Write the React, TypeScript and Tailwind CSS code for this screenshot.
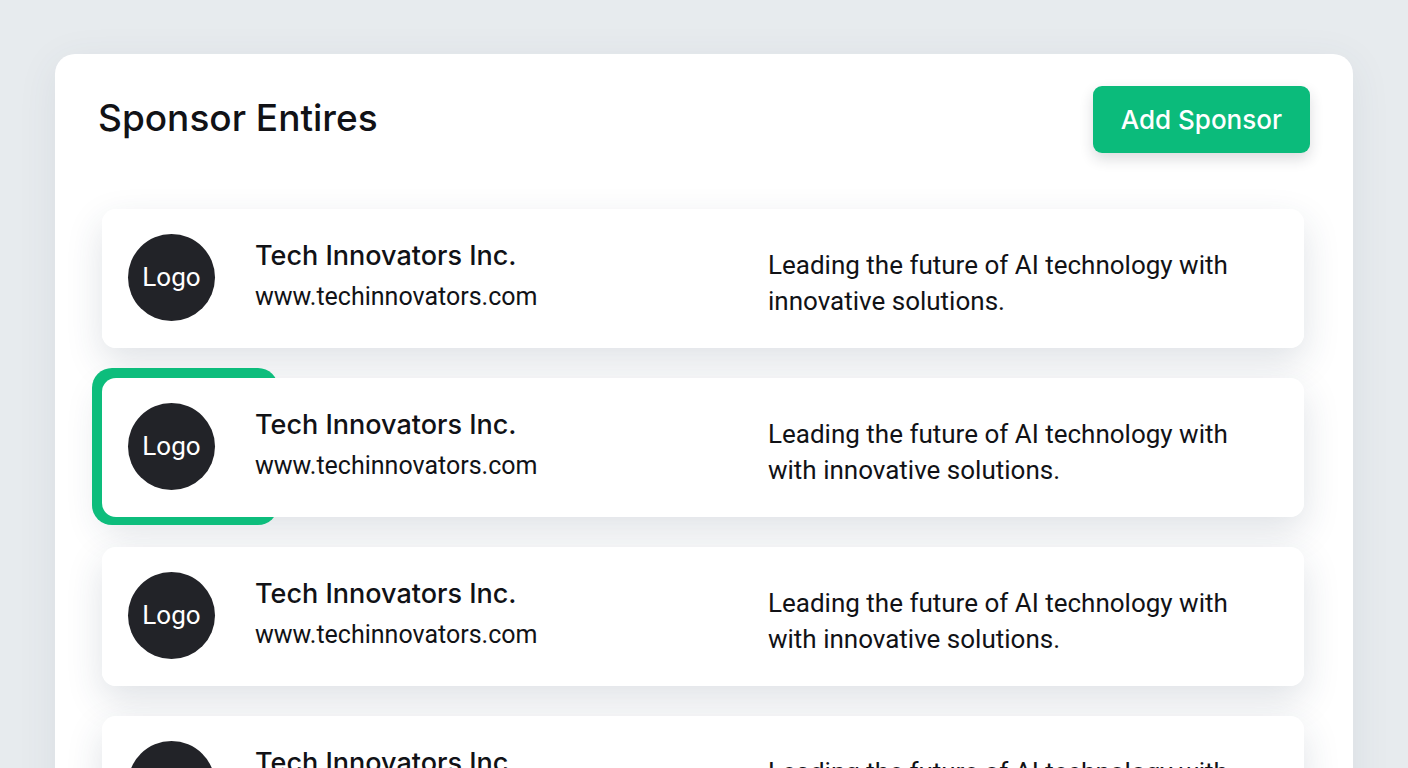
type Sponsor = {
  id: number;
  name: string;
  site: string;
  lines: [string, string];
  selected?: boolean;
};

const sponsors: Sponsor[] = [
  {
    id: 1,
    name: 'Tech Innovators Inc.',
    site: 'www.techinnovators.com',
    lines: ['Leading the future of AI technology with', 'innovative solutions.'],
  },
  {
    id: 2,
    name: 'Tech Innovators Inc.',
    site: 'www.techinnovators.com',
    lines: ['Leading the future of AI technology with', 'with innovative solutions.'],
    selected: true,
  },
  {
    id: 3,
    name: 'Tech Innovators Inc.',
    site: 'www.techinnovators.com',
    lines: ['Leading the future of AI technology with', 'with innovative solutions.'],
  },
  {
    id: 4,
    name: 'Tech Innovators Inc.',
    site: 'www.techinnovators.com',
    lines: ['Leading the future of AI technology with', 'with innovative solutions.'],
  },
];

function SponsorRow({ sponsor }: { sponsor: Sponsor }) {
  return (
    <li className="relative rounded-[14px] shadow-[0_14px_36px_rgba(40,60,85,0.15)]">
      {sponsor.selected && (
        <span
          aria-hidden="true"
          className="absolute -top-2.5 -bottom-2 -left-2.5 w-[186px] rounded-[20px] bg-[#0dbd7c]"
        />
      )}
      <article className="relative grid grid-cols-[640fr_512fr] items-center rounded-[14px] bg-white pt-[25px] pr-6 pb-[27px] pl-[26px]">
        <div className="flex items-center gap-10">
          <div className="flex size-[87px] shrink-0 items-center justify-center rounded-full bg-[#222328] font-['Roboto','Liberation_Sans',sans-serif] text-[26px] text-white">
            Logo
          </div>
          <div className="min-w-0">
            <h2 className="text-[27px] leading-[42px] font-medium text-[#111216]">{sponsor.name}</h2>
            <a
              href={`https://${sponsor.site}`}
              className="block pb-1 font-['Roboto','Liberation_Sans',sans-serif] text-[25px] leading-10 text-[#111216]"
            >
              {sponsor.site}
            </a>
          </div>
        </div>
        <p className="pt-2.5 font-['Roboto','Liberation_Sans',sans-serif] text-[26px] leading-9 text-[#111216]">
          {sponsor.lines[0]}
          <br />
          {sponsor.lines[1]}
        </p>
      </article>
    </li>
  );
}

export default function App() {
  return (
    <div className="min-h-screen bg-[#e7ebee] px-[55px] pt-[54px] font-['Inter','Liberation_Sans',sans-serif]">
      <main className="rounded-t-[20px] bg-white px-[43px] pt-8 pb-12 shadow-[0_8px_40px_rgba(60,80,105,0.08)]">
        <header className="flex items-center justify-between">
          <h1 className="pb-1 text-[37px] leading-[48px] font-medium text-[#111216]">Sponsor Entires</h1>
          <button
            type="button"
            className="h-[67px] rounded-[9px] bg-[#0bbb7b] px-7 text-[26px] font-medium text-white shadow-[0_6px_14px_rgba(30,40,50,0.16)]"
          >
            Add Sponsor
          </button>
        </header>
        <ul className="mt-14 flex flex-col gap-[30px] pr-[6px] pl-1">
          {sponsors.map((sponsor) => (
            <SponsorRow key={sponsor.id} sponsor={sponsor} />
          ))}
        </ul>
      </main>
    </div>
  );
}
